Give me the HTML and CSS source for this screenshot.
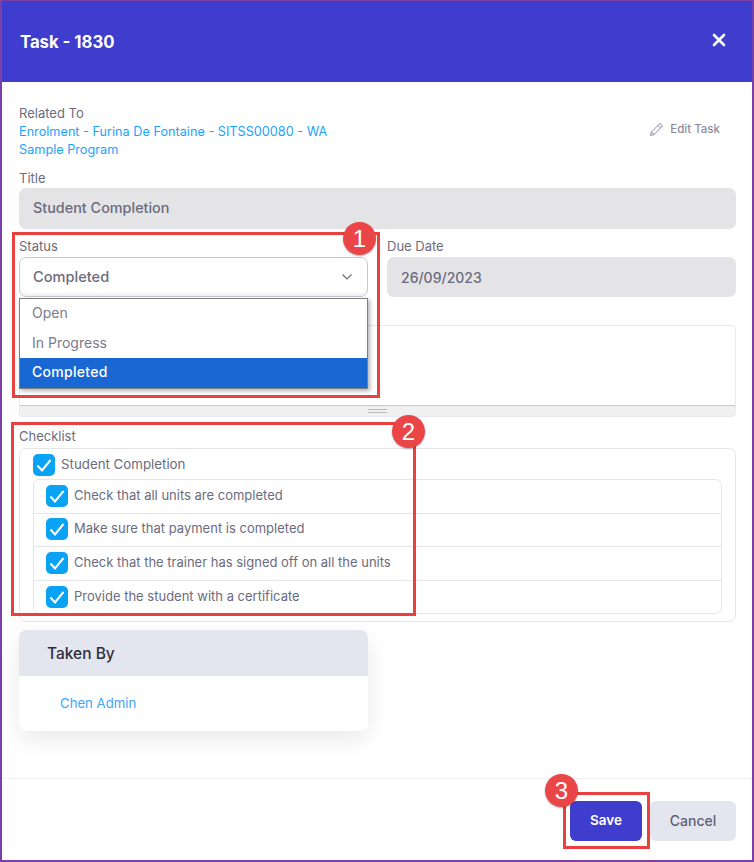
FILE: index.html
```html
<!DOCTYPE html>
<html lang="en">
<head>
<meta charset="utf-8">
<title>Task - 1830</title>
<link rel="stylesheet" href="styles.css">
</head>
<body>
<div class="modal">
  <header class="modal-header">
    <h1 class="modal-title">Task - 1830</h1>
    <svg class="close-icon" width="14" height="14" viewBox="0 0 14 14"><path d="M2 2l10 10M12 2L2 12" fill="none" stroke="#fff" stroke-width="2.6" stroke-linecap="round"/></svg>
  </header>
  <main class="modal-body">
    <div class="related-row">
      <div class="related">
        <div class="label">Related To</div>
        <a class="link">Enrolment - Furina De Fontaine - SITSS00080 - WA Sample Program</a>
      </div>
      <div class="edit-task">
        <svg width="15" height="15" viewBox="0 0 15 15"><path d="M1.5 13.5l1-3.6 7.7-7.7a1.3 1.3 0 0 1 1.9 0l.7.7a1.3 1.3 0 0 1 0 1.9l-7.7 7.7zM2.5 9.9l2.6 2.6M9 3.4l2.6 2.6" fill="none" stroke="#8b8b9f" stroke-width="1"/></svg>
        <span>Edit Task</span>
      </div>
    </div>
    <div class="label title-label">Title</div>
    <div class="field disabled title-field">Student Completion</div>
    <div class="two-col">
      <div class="col">
        <div class="label">Status</div>
        <div class="select-wrap">
          <div class="field select">
            <span>Completed</span>
            <svg width="12" height="8" viewBox="0 0 12 8"><path d="M1.5 1.5L6 6l4.5-4.5" fill="none" stroke="#6b6b7e" stroke-width="1.2"/></svg>
          </div>
          <ul class="dropdown">
            <li>Open</li>
            <li>In Progress</li>
            <li class="selected">Completed</li>
          </ul>
        </div>
      </div>
      <div class="col">
        <div class="label">Due Date</div>
        <div class="field disabled date">26/09/2023</div>
      </div>
    </div>
    <div class="editor">
      <div class="editor-area"></div>
      <div class="editor-status"><span class="grip"></span></div>
    </div>
    <div class="label checklist-label">Checklist</div>
    <div class="checklist">
      <div class="root-item">
        <svg class="check" width="22" height="22" viewBox="0 0 22 22"><rect width="22" height="22" rx="5" fill="#0aa2f5"/><path d="M4.5 11.5l4.5 5 8.5-10.5" fill="none" stroke="#fff" stroke-width="2"/></svg>
        <span>Student Completion</span>
      </div>
      <ul class="sub-list">
        <li class="sub-item"><svg class="check" width="22" height="22" viewBox="0 0 22 22"><rect width="22" height="22" rx="5" fill="#0aa2f5"/><path d="M4.5 11.5l4.5 5 8.5-10.5" fill="none" stroke="#fff" stroke-width="2"/></svg><span>Check that all units are completed</span></li>
        <li class="sub-item"><svg class="check" width="22" height="22" viewBox="0 0 22 22"><rect width="22" height="22" rx="5" fill="#0aa2f5"/><path d="M4.5 11.5l4.5 5 8.5-10.5" fill="none" stroke="#fff" stroke-width="2"/></svg><span>Make sure that payment is completed</span></li>
        <li class="sub-item"><svg class="check" width="22" height="22" viewBox="0 0 22 22"><rect width="22" height="22" rx="5" fill="#0aa2f5"/><path d="M4.5 11.5l4.5 5 8.5-10.5" fill="none" stroke="#fff" stroke-width="2"/></svg><span>Check that the trainer has signed off on all the units</span></li>
        <li class="sub-item"><svg class="check" width="22" height="22" viewBox="0 0 22 22"><rect width="22" height="22" rx="5" fill="#0aa2f5"/><path d="M4.5 11.5l4.5 5 8.5-10.5" fill="none" stroke="#fff" stroke-width="2"/></svg><span>Provide the student with a certificate</span></li>
      </ul>
    </div>
    <section class="card">
      <div class="card-header">Taken By</div>
      <div class="card-body"><a class="card-link">Chen Admin</a></div>
    </section>
  </main>
  <footer class="modal-footer">
    <button class="btn btn-primary">Save</button>
    <button class="btn btn-secondary">Cancel</button>
  </footer>
  <div class="callout callout-1"></div>
  <div class="callout callout-2"></div>
  <div class="callout callout-3"></div>
  <div class="badge badge-1">1</div>
  <div class="badge badge-2">2</div>
  <div class="badge badge-3">3</div>
</div>
</body>
</html>
```
FILE: styles.css
```css
* { box-sizing: border-box; }
html, body { margin: 0; padding: 0; background: #fff; }
body { font-family: "Inter", "Open Sans", sans-serif; color: #6b6b7e; font-size: 13px; }
ul { list-style: none; margin: 0; padding: 0; }

.modal {
  position: relative;
  width: 754px;
  height: 862px;
  border: solid #7b3fa9;
  border-width: 1px 2px 2px 2px;
  display: flex;
  flex-direction: column;
  overflow: hidden;
}
.modal-header {
  height: 81px;
  flex: none;
  background: #3f3dcd;
  display: flex;
  align-items: center;
  justify-content: space-between;
  padding: 0 26px 0 18px;
}
.modal-title { margin: 0; color: #fff; font-size: 16.7px; font-weight: 700; }
.close-icon { margin-top: -3px; }

.modal-body { flex: 1; padding: 22px 16px 0 17px; }
.label { font-size: 13px; line-height: 18px; color: #6c6c7c; }
.related-row { display: flex; justify-content: space-between; height: 60px; }
.related { width: 320px; }
.link { display: block; color: #1ba3fb; font-size: 12.7px; line-height: 18px; margin-top: 1px; }
.edit-task { display: flex; align-items: center; gap: 6px; height: 18px; margin: 16px 16px 0 0; color: #8b8b9f; font-size: 11.5px; font-weight: 500; }

.title-label { height: 17px; margin-top: 6px; line-height: 16px; }
.field {
  height: 41px;
  border-radius: 7px;
  padding: 0 14px;
  font-size: 14.4px;
  font-weight: 500;
  display: flex;
  align-items: center;
  color: #6b6b7e;
}
.disabled { background: #e4e4e6; margin-top: 1px; }
.title-field { padding-bottom: 2px; }
.date { font-size: 14px; }
.two-col { display: grid; grid-template-columns: 349px 349px; gap: 19px; margin-top: 8px; }
.col .label { height: 18px; }
.col .field { margin-top: 2px; height: 40px; }
.select-wrap { position: relative; }
.select {
  background: #fff;
  border: 1px solid #c8c8d4;
  padding-left: 13px;
  justify-content: space-between;
  box-shadow: inset 0 -5px 6px -5px #ddd;
  font-size: 14.6px;
}
.dropdown {
  position: absolute;
  left: 0;
  right: 0;
  top: 41px;
  z-index: 1;
  background: #fff;
  border: 1px solid #7d7d7d;
  box-shadow: 2px 2px 4px rgba(0,0,0,.3);
  font-size: 14px;
}
.dropdown li { height: 29.5px; line-height: 28px; padding-left: 12px; color: #7a7a90; }
.dropdown .selected { background: #1967d2; color: #fff; font-weight: 500; letter-spacing: .3px; }

.editor {
  height: 92px;
  margin-top: 28px;
  border: 1px solid #e8e8f2;
  border-radius: 4px;
  display: flex;
  flex-direction: column;
}
.editor-area { flex: 1; border-bottom: 1px solid #c9c9c9; }
.editor-status { height: 10px; background: #f0f0f0; display: flex; justify-content: center; align-items: center; }
.grip { display: block; width: 19px; height: 4px; border-top: 1px solid #bbb; border-bottom: 1px solid #bbb; }

.checklist-label { margin-top: 10px; height: 18px; }
.checklist {
  height: 174px;
  margin-top: 3px;
  border: 1px solid #e6e6ea;
  border-radius: 7px;
  padding: 5px 13px 0 13px;
}
.root-item { display: flex; align-items: center; gap: 6px; height: 22px; font-size: 13.3px; }
.root-item span { padding-bottom: 2px; }
.check { flex: none; }
.sub-list { margin-top: 3px; border: 1px solid #e6e6ea; border-radius: 6px; height: 135px; }
.sub-item {
  height: 33.5px;
  display: flex;
  align-items: center;
  gap: 6px;
  padding: 0 0 1px 12px;
  font-size: 13px;
  border-bottom: 1px solid #e6e6ea;
}
.sub-item span { padding-bottom: 2px; }
.sub-item:last-child { border-bottom: 0; }

.card {
  width: 349px;
  height: 101px;
  margin-top: 8px;
  border-radius: 8px;
  background: #fff;
  overflow: hidden;
  box-shadow: 0 8px 24px rgba(0,0,0,.09);
}
.card-header {
  height: 46px;
  background: #e3e6ef;
  padding-left: 28px;
  display: flex;
  align-items: center;
  font-size: 15.5px;
  font-weight: 500;
  color: #2e2e3a;
}
.card-body { padding: 18px 0 0 41px; }
.card-link { color: #3fa4fb; font-size: 13.2px; line-height: 18px; }

.modal-footer {
  height: 82px;
  flex: none;
  border-top: 1px solid #f1f1f3;
  display: flex;
  justify-content: flex-end;
  gap: 8px;
  padding: 22px 16px 0 0;
}
.btn {
  height: 40px;
  border: 0;
  border-radius: 6px;
  padding: 0 0 2px;
  font-family: inherit;
  font-size: 13.5px;
  font-weight: 600;
}
.btn-primary { width: 72px; background: #3f3dcd; color: #fff; }
.btn-secondary { width: 86px; background: #e4e6ef; color: #5f5f70; font-weight: 500; font-size: 14px; }

.callout { position: absolute; border: 3px solid #e8413f; z-index: 2; }
.callout-1 { left: 10px; top: 231px; width: 368px; height: 166px; }
.callout-2 { left: 9px; top: 421px; width: 405px; height: 194px; }
.callout-3 { left: 561px; top: 791px; width: 87px; height: 57px; }
.badge {
  position: absolute;
  z-index: 3;
  width: 33px;
  height: 33px;
  border-radius: 50%;
  background: #ea4647;
  color: #fff;
  font-family: "Liberation Sans", sans-serif;
  font-size: 24px;
  line-height: 33px;
  text-align: center;
  box-shadow: 0 1px 2px rgba(0,0,0,.3);
}
.badge-1 { left: 341px; top: 221px; }
.badge-2 { left: 390px; top: 414px; }
.badge-3 { left: 543px; top: 773px; }
```
